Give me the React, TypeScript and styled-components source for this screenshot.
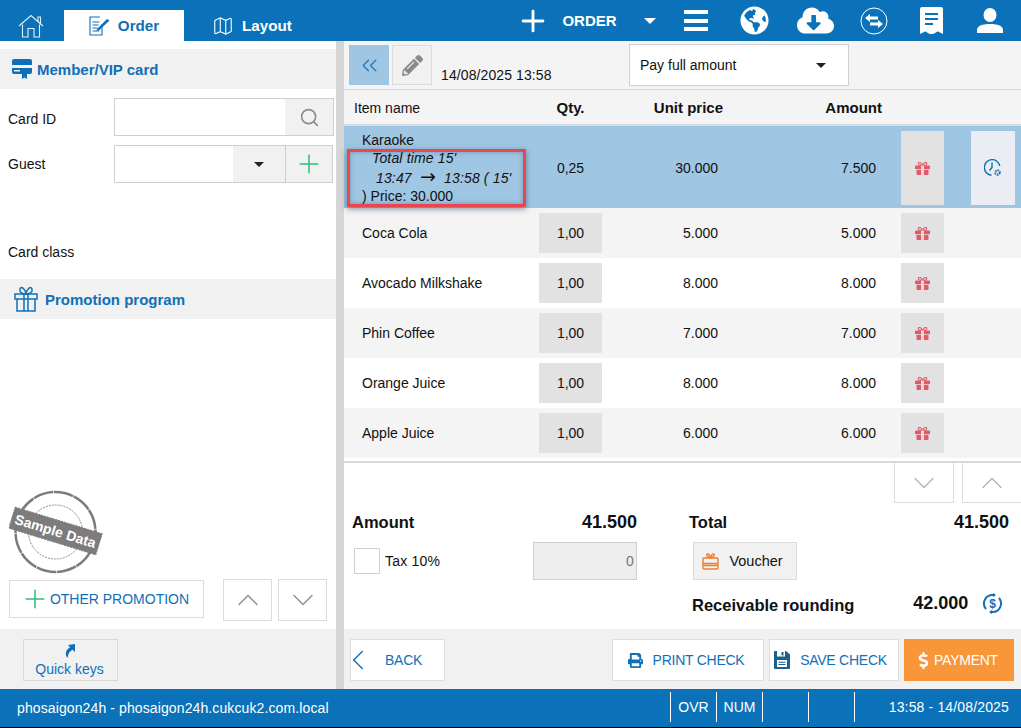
import React from 'react'
import styled, { createGlobalStyle } from 'styled-components'
import { ChevronDown, ChevronLeft, ChevronUp, ChevronsLeft, Map as MapIcon, Plus, Search } from 'lucide-react'
import { FaCloudDownloadAlt, FaDollarSign, FaGlobeAmericas, FaPencilAlt, FaPrint } from 'react-icons/fa'

const BLUE = '#0b72b9'
const LINK = '#0f70b7'
const PANEL = '#f1f1f1'
const LINE = '#d6d6d6'

const GlobalStyle = createGlobalStyle`
  html, body { margin: 0; padding: 0; background: #fff; }
  * { box-sizing: border-box; }
  body { font-family: "Liberation Sans", Arial, sans-serif; font-size: 14px; color: #111; }
`

const Screen = styled.div`
  position: relative;
  width: 1021px;
  height: 728px;
  display: flex;
  flex-direction: column;
  overflow: hidden;
  border-bottom: 1px solid #000;
`

/* top bar */
const TopBar = styled.header`
  height: 41px;
  flex: none;
  display: flex;
  background: ${BLUE};
`
const Tabs = styled.nav`
  display: flex;
  align-items: flex-end;
`
const Tab = styled.div<{ $active?: boolean; $w: number }>`
  width: ${p => p.$w}px;
  height: 31px;
  display: flex;
  align-items: center;
  justify-content: center;
  gap: 8px;
  font-weight: 700;
  font-size: 15.2px;
  color: ${p => (p.$active ? LINK : '#fff')};
  background: ${p => (p.$active ? '#fff' : 'transparent')};
`
const TopActions = styled.div`
  margin-left: auto;
  margin-right: -2px;
  display: flex;
  align-items: center;
  color: #fff;
`
const TopSlot = styled.div<{ $w: number }>`
  width: ${p => p.$w}px;
  height: 41px;
  display: flex;
  align-items: center;
  justify-content: center;
  font-size: 15px;
  font-weight: 700;
`
const Burger = styled.div`
  width: 24px;
  height: 21px;
  border-top: 4px solid #fff;
  border-bottom: 4px solid #fff;
  position: relative;
  &::after {
    content: '';
    position: absolute;
    left: 0;
    right: 0;
    top: 4.5px;
    height: 4px;
    background: #fff;
  }
`
const Caret = styled.span<{ $color?: string; $size?: number }>`
  display: inline-block;
  width: 0;
  height: 0;
  border-left: ${p => p.$size ?? 5}px solid transparent;
  border-right: ${p => p.$size ?? 5}px solid transparent;
  border-top: ${p => p.$size ?? 5}px solid ${p => p.$color ?? '#222'};
`

/* page body */
const Body = styled.div`
  flex: 1;
  min-height: 0;
  display: flex;
`
const LeftPanel = styled.aside`
  width: 344px;
  flex: none;
  display: flex;
  flex-direction: column;
  border-right: 8px solid ${LINE};
  padding-top: 8px;
  background: #fff;
`
const SectionHead = styled.div<{ $gap: number; $pad: number }>`
  height: 40px;
  flex: none;
  display: flex;
  align-items: center;
  gap: ${p => p.$gap}px;
  padding-left: ${p => p.$pad}px;
  background: ${PANEL};
  color: ${LINK};
  font-size: 15px;
  font-weight: 700;
`
const Form = styled.div`
  height: 190px;
  flex: none;
  padding: 9px 2px 0 8px;
  display: flex;
  flex-direction: column;
`
const FormRow = styled.div<{ $mb: number }>`
  display: flex;
  align-items: center;
  height: 38px;
  margin-bottom: ${p => p.$mb}px;
`
const FormLabel = styled.label<{ $dy?: number }>`
  width: 106px;
  font-size: 14px;
  margin-top: ${p => p.$dy ?? 0}px;
`
const FieldBox = styled.div<{ $mr?: number }>`
  flex: 1;
  height: 38px;
  margin-right: ${p => p.$mr ?? 0}px;
  display: flex;
  background: #fff;
  border: 1px solid #cfcfcf;
`
const FieldEnd = styled.div<{ $w: number; $split?: boolean }>`
  width: ${p => p.$w}px;
  display: flex;
  align-items: center;
  justify-content: center;
  background: ${PANEL};
  color: #8c8c8c;
  border-left: ${p => (p.$split ? '1px solid #cfcfcf' : 'none')};
`
const FieldFill = styled.div`
  flex: 1;
`
const StampArea = styled.div`
  flex: 1;
  display: flex;
  align-items: flex-end;
  padding: 0 0 4px 9px;
`
const PromoBar = styled.div`
  height: 50px;
  flex: none;
  display: flex;
  align-items: center;
  padding: 0 7px 8px 9px;
`
const OutlineButton = styled.button<{ $w: number; $h: number; $ml?: number }>`
  width: ${p => p.$w}px;
  height: ${p => p.$h}px;
  margin-left: ${p => p.$ml ?? 0}px;
  display: flex;
  align-items: center;
  justify-content: center;
  gap: 2px;
  padding: 0;
  background: #fff;
  border: 1px solid #dcdcdc;
  color: ${LINK};
  font: 14px "Liberation Sans", Arial, sans-serif;
  white-space: nowrap;
`
const PromoButton = styled(OutlineButton)`
  gap: 0;
  margin-top: -2px;
  padding-right: 4px;
`
const LeftFooter = styled.div`
  height: 60px;
  flex: none;
  padding: 10px 0 0 23px;
  background: ${PANEL};
`
const QuickKeys = styled.button`
  width: 95px;
  height: 42px;
  display: flex;
  flex-direction: column;
  align-items: center;
  justify-content: center;
  gap: 3px;
  padding: 1px 2px 0 0;
  background: ${PANEL};
  border: 1px solid #d9d9d9;
  color: ${LINK};
  font: 14px/16px "Liberation Sans", Arial, sans-serif;
`

/* order side */
const OrderPanel = styled.main`
  flex: 1;
  min-width: 0;
  display: flex;
  flex-direction: column;
`
const OrderBar = styled.div`
  height: 49px;
  flex: none;
  display: flex;
  padding: 4px 0 0 5px;
  background: #f4f4f4;
  border-bottom: 1px solid #d8d8d8;
`
const SquareButton = styled.div<{ $active?: boolean }>`
  width: 40px;
  height: 40px;
  margin-right: 3px;
  display: flex;
  align-items: center;
  justify-content: center;
  background: ${p => (p.$active ? '#9fc6e3' : '#f1f1f1')};
  border: 1px solid ${p => (p.$active ? '#9fc6e3' : '#dcdcdc')};
  color: ${p => (p.$active ? '#2a79b3' : '#8a8a8a')};
`
const DateText = styled.div`
  width: 194px;
  padding: 22px 0 0 6px;
  font-size: 14px;
  letter-spacing: 0.1px;
`
const SelectBox = styled.div`
  width: 220px;
  height: 42px;
  margin-top: -1px;
  display: flex;
  align-items: center;
  justify-content: space-between;
  padding: 0 22px 0 10px;
  background: #fff;
  border: 1px solid #d0d0d0;
  font-size: 14px;
`
const columns = '195px 63px 116px 158px 68px 71px 6px'
const HeadRow = styled.div`
  height: 36px;
  flex: none;
  display: grid;
  grid-template-columns: ${columns};
  align-items: center;
  background: #f4f4f4;
  border-bottom: 2px solid #d4dde4;
  font-size: 15px;
  font-weight: 700;
`
const HeadCell = styled.div<{ $align: string; $plain?: boolean; $shift?: number }>`
  text-align: ${p => p.$align};
  font-size: ${p => (p.$plain ? 14 : 15)}px;
  font-weight: ${p => (p.$plain ? 400 : 700)};
  padding: ${p => (p.$plain ? '1px 0 0 10px' : '0')};
  transform: translateX(${p => p.$shift ?? 0}px);
`
const ItemRow = styled.div<{ $tone: 'sel' | 'grey' | 'white'; $h: number }>`
  height: ${p => p.$h}px;
  flex: none;
  display: grid;
  grid-template-columns: ${columns};
  align-items: stretch;
  padding: 5px 0;
  background: ${p => (p.$tone === 'sel' ? '#9fc6e3' : p.$tone === 'grey' ? '#f4f4f4' : '#fff')};
  font-size: 14px;
`
const NameCell = styled.div`
  padding-left: 18px;
  display: flex;
  flex-direction: column;
  justify-content: center;
  line-height: 18px;
  white-space: pre;
`
const NameLine = styled.div<{ $pad?: number; $italic?: boolean }>`
  padding-left: ${p => p.$pad ?? 0}px;
  font-style: ${p => (p.$italic ? 'italic' : 'normal')};
  letter-spacing: ${p => (p.$italic ? 0.15 : 0)}px;
`
const Arrow = styled.span`
  font-family: "DejaVu Sans", sans-serif;
  font-style: normal;
  font-size: 19px;
`
const QtyCell = styled.div<{ $flat?: boolean }>`
  display: flex;
  align-items: center;
  justify-content: center;
  background: ${p => (p.$flat ? 'transparent' : '#e2e2e2')};
`
const NumCell = styled.div`
  display: flex;
  align-items: center;
  justify-content: flex-end;
`
const GiftCell = styled.div`
  margin-left: 25px;
  display: flex;
  align-items: center;
  justify-content: center;
  background: #e2e2e2;
`
const ClockCell = styled.div`
  margin-left: 27px;
  display: flex;
  align-items: center;
  justify-content: center;
  background: #eaedf3;
`
const Note = styled.div`
  position: absolute;
  left: 347px;
  top: 149px;
  width: 179px;
  height: 58px;
  border: 3px solid #e9474f;
  box-shadow: 0 2px 6px rgba(40, 60, 80, 0.55), inset 0 0 5px rgba(40, 60, 80, 0.35);
  pointer-events: none;
`
const Summary = styled.section`
  flex: 1;
  min-height: 0;
  margin-top: 3px;
  border-top: 2px solid #d8d8d8;
  background: #fff;
  display: flex;
  flex-direction: column;
`
const PagerRow = styled.div`
  height: 41px;
  flex: none;
  display: flex;
  justify-content: flex-end;
  margin-right: -1px;
  gap: 8px;
`
const PagerButton = styled.div<{ $w: number }>`
  width: ${p => p.$w}px;
  height: 40px;
  display: flex;
  align-items: center;
  justify-content: center;
  border: 1px solid #dcdcdc;
  border-top: none;
  color: #b4b4b4;
`
const Totals = styled.div`
  flex: 1;
  display: grid;
  grid-template-columns: 285px 1fr;
  padding: 0 12px 0 8px;
`
const TotalColumn = styled.div<{ $left?: boolean }>`
  display: flex;
  flex-direction: column;
  padding-left: ${p => (p.$left ? 0 : 52)}px;
`
const TotalRow = styled.div`
  height: 38px;
  padding-bottom: 2px;
  display: flex;
  align-items: center;
  justify-content: space-between;
  font-size: 16.5px;
  font-weight: 700;
`
const Money = styled.span`
  font-size: 18px;
`
const TaxRow = styled.div`
  height: 38px;
  display: flex;
  align-items: center;
  font-size: 14px;
  letter-spacing: 0.2px;
`
const CheckBox = styled.div`
  width: 26px;
  height: 26px;
  margin: 0 5px 0 2px;
  background: #fff;
  border: 1px solid #cfcfcf;
  border-radius: 1px;
`
const TaxInput = styled.div`
  width: 104px;
  height: 38px;
  margin-left: auto;
  display: flex;
  align-items: center;
  justify-content: flex-end;
  padding-right: 2px;
  background: #eeeeee;
  border: 1px solid #cfcfcf;
  color: #777;
`
const VoucherButton = styled.button`
  width: 104px;
  height: 38px;
  margin-left: 4px;
  display: flex;
  align-items: center;
  justify-content: center;
  gap: 10px;
  padding: 0 5px 0 0;
  background: #f1f1f1;
  border: 1px solid #dcdcdc;
  color: #111;
  font: 14.5px "Liberation Sans", Arial, sans-serif;
`
const RoundingRow = styled.div`
  display: flex;
  align-items: center;
  height: 30px;
  margin: 10px 0 0 3px;
  font-size: 16.5px;
  font-weight: 700;
`
const RoundingValue = styled(Money)`
  margin-left: 59px;
  margin-top: -3px;
`
const RoundingIcon = styled.span`
  display: flex;
  margin-left: 14px;
  margin-top: -3px;
`
const ActionBar = styled.div`
  height: 60px;
  flex: none;
  display: flex;
  align-items: center;
  padding: 2px 7px 0 6px;
  background: ${PANEL};
`
const ActionButton = styled.button<{ $w: number; $gap: number; $ml?: string; $pr?: number }>`
  width: ${p => p.$w}px;
  height: 42px;
  margin-left: ${p => p.$ml ?? '0'};
  display: flex;
  align-items: center;
  justify-content: center;
  gap: ${p => p.$gap}px;
  padding: 0 ${p => p.$pr ?? 0}px 0 0;
  background: #fff;
  border: 1px solid #dedede;
  color: ${LINK};
  font: 14px "Liberation Sans", Arial, sans-serif;
  letter-spacing: -0.25px;
`
const BackButton = styled(ActionButton)`
  justify-content: flex-start;
`
const BackChevron = styled(ChevronLeft)`
  margin-left: -10px;
`
const PayButton = styled(ActionButton)`
  background: #f9963a;
  border-color: #f9963a;
  color: #fff;
`
const StatusBar = styled.footer`
  height: 38px;
  flex: none;
  display: flex;
  align-items: center;
  background: ${BLUE};
  color: #fff;
  font-size: 14px;
`
const StatusHost = styled.div`
  width: 670px;
  padding-left: 17px;
  letter-spacing: 0.11px;
`
const StatusCell = styled.div`
  width: 46px;
  height: 30px;
  margin-top: -3px;
  display: flex;
  align-items: center;
  justify-content: center;
  border-left: 1px solid #fff;
`
const StatusTime = styled.div`
  flex: 1;
  height: 30px;
  margin-top: -3px;
  display: flex;
  align-items: center;
  justify-content: flex-end;
  padding-right: 12px;
  border-left: 1px solid #fff;
  letter-spacing: 0.15px;
`

/* drawings */
const HomeIcon = () => (
  <svg width="26" height="24" viewBox="0 0 26 24" fill="none" stroke="#e4f0f8" strokeWidth="1.1">
    <path d="M1 12 13 1.500 25 12M20 7.500V3h2.500v6.500" />
    <path d="M4.500 10.500V23H10V14.500h6V23h5.500V10.500" />
  </svg>
)
const OrderIcon = () => (
  <svg width="21" height="20" viewBox="0 0 21 20" fill="none" stroke={LINK} strokeWidth="1.1">
    <path d="M13 8V19H1V1h10" />
    <path d="M3.500 6h7M3.500 9h6M3.500 12h5M3.500 15h7" />
    <path d="M8 13 18 3l2.500 1.500-10 9.500-3 1z" fill={LINK} stroke="none" />
  </svg>
)
const CardIcon = () => (
  <svg width="20" height="21" viewBox="0 0 20 21">
    <path d="M2 0h16a2 2 0 0 1 2 2v11a2 2 0 0 1-2 2h-3v5l-2.500-1.500L10 20v-5H2a2 2 0 0 1-2-2V2a2 2 0 0 1 2-2z" fill={LINK} />
    <rect x="0" y="6" width="20" height="3" fill="#f1f1f1" />
    <rect x="2" y="11" width="6" height="1.500" fill="#f1f1f1" />
  </svg>
)
const PromoIcon = () => (
  <svg width="24" height="26" viewBox="0 0 24 26" fill="none" stroke={LINK} strokeWidth="1.500">
    <rect x="1" y="8" width="22" height="5" />
    <path d="M3 13v12h18V13M10 8v17M14 8v17" />
    <path d="M12 8C8 8 5 6 6 3s5-1 6 5c1-6 5-8 6-5s-2 5-6 5z" />
  </svg>
)
const GiftIcon = () => (
  <svg width="15" height="13" viewBox="0 0 15 13" fill="#e25a68">
    <path d="M1 3.500h13a1 1 0 0 1 1 1V7H0V4.500a1 1 0 0 1 1-1zM1.500 7.800h12V12a1 1 0 0 1-1 1h-10a1 1 0 0 1-1-1z" />
    <path d="M7.500 3.500C5 3.500 3 2.800 3.200 1.300S6.500.2 7.500 3.500c1-3.300 4.100-3.700 4.300-2.200S10 3.500 7.500 3.500z" fill="none" stroke="#e25a68" strokeWidth="1.100" />
    <rect x="6" y="3.500" width="3" height="9.500" fill="#f3d5d8" />
  </svg>
)
const SwapIcon = () => (
  <svg width="28" height="28" viewBox="0 0 28 28" fill="#fff">
    <circle cx="14" cy="14" r="13" fill="none" stroke="#fff" strokeWidth="1" />
    <path d="M5 11l5-4v2.500h8v3h-8V15zM23 17l-5 4v-2.500h-8v-3h8V13z" />
  </svg>
)
const ReceiptIcon = () => (
  <svg width="23" height="27" viewBox="0 0 23 27">
    <path d="M2 0h19a2 2 0 0 1 2 2v25l-5-2.500c-2 0-2.500 2.500-6.500 2.500S7 24.500 5 24.500L0 27V2a2 2 0 0 1 2-2z" fill="#fff" />
    <path d="M5 6h13v2H5zM5 11h13v2H5zM5 16h8v2H5z" fill={BLUE} />
  </svg>
)
const UserIcon = () => (
  <svg width="26" height="25" viewBox="0 0 26 25" fill="#fff">
    <ellipse cx="13" cy="7" rx="6.500" ry="7" />
    <path d="M0 25v-3c0-4 5-6 13-6s13 2 13 6v3z" />
  </svg>
)
const ClockGearIcon = () => (
  <svg width="18" height="18" viewBox="0 0 18 18" fill="none" stroke={LINK} strokeWidth="1.400">
    <path d="M15.800 7A7.800 7.800 0 1 0 7.500 16.200" />
    <path d="M8 3.500V8.500L5.500 11.500" />
    <circle cx="13.500" cy="13.500" r="2.200" strokeWidth="2" strokeDasharray="1.500 .8" />
  </svg>
)
const VoucherIcon = () => (
  <svg width="17" height="17" viewBox="0 0 17 17" fill="none" stroke="#f07f2e" strokeWidth="1.400">
    <rect x="1" y="5" width="15" height="11" rx="1" />
    <path d="M1 10.500h15M1 12.500h15" />
    <path d="M8.500 5C6 4 4 2.500 5 1.200S8 2 8.500 5c.5-3 2.500-5 3.500-3.800S11 4 8.500 5z" />
  </svg>
)
const RoundIcon = () => (
  <svg width="21" height="21" viewBox="0 0 21 21" fill="none" stroke={LINK} strokeWidth="2">
    <path d="M4 16A8.500 8.500 0 0 1 10.500 2h2M17 5a8.500 8.500 0 0 1-6.500 14h-2" />
    <path d="M11 0l3 2-3 2zM10 17l-3 2 3 2z" fill={LINK} stroke="none" />
    <text x="10.500" y="14.500" textAnchor="middle" fontSize="12" fontWeight="700" fill={LINK} stroke="none" fontFamily="Liberation Sans">$</text>
  </svg>
)
const QuickIcon = () => (
  <svg width="12" height="14" viewBox="0 0 12 14" fill={LINK}>
    <path d="M11 0v8L8.500 5.800C6 7 4 9.500 3.500 14 1 11 1 6 6 3.200L4 1z" />
  </svg>
)
const FloppyIcon = () => (
  <svg width="16" height="18" viewBox="0 0 16 18">
    <path d="M0 1a1 1 0 0 1 1-1h11l4 3.500V17a1 1 0 0 1-1 1H1a1 1 0 0 1-1-1z" fill="#1d5f8d" />
    <rect x="3" y="0" width="8" height="5.500" fill="#fff" />
    <rect x="7.500" y="1" width="2" height="3.500" fill="#1d5f8d" />
    <path d="M3 9h10v7H3z" fill="#fff" />
    <path d="M4.500 10.700h7v1h-7zM4.500 13h7v1h-7z" fill="#1d5f8d" />
  </svg>
)
const Stamp = () => (
  <svg width="94" height="86" viewBox="0 0 94 86" fill="none">
    <circle cx="46.500" cy="43" r="40" stroke="#7d7b7e" strokeWidth="2.500" strokeDasharray="20 .7" />
    <circle cx="46.500" cy="43" r="27" stroke="#8f8d90" strokeWidth="1" strokeDasharray="2 1" />
    <g transform="rotate(17 46.500 42)">
      <rect x="1" y="31" width="91" height="22" fill="#7d7b7e" stroke="#7d7b7e" strokeDasharray="2 1" />
      <text x="46.500" y="47" textAnchor="middle" fontSize="14" fontWeight="700" fill="#fff" fontFamily="Liberation Sans">Sample Data</text>
    </g>
  </svg>
)

const items = [
  { name: 'Coca Cola', price: '5.000', tone: 'grey' },
  { name: 'Avocado Milkshake', price: '8.000', tone: 'white' },
  { name: 'Phin Coffee', price: '7.000', tone: 'grey' },
  { name: 'Orange Juice', price: '8.000', tone: 'white' },
  { name: 'Apple Juice', price: '6.000', tone: 'grey' },
] as const

export default function App() {
  return (
    <Screen>
      <GlobalStyle />
      <TopBar>
        <Tabs>
          <Tab $w={61}><HomeIcon /></Tab>
          <Tab $w={3} />
          <Tab $w={120} $active><OrderIcon />Order</Tab>
          <Tab $w={136}><MapIcon size={22} strokeWidth={1.2} />Layout</Tab>
        </Tabs>
        <TopActions>
          <TopSlot $w={42}><Plus size={34} strokeWidth={2} /></TopSlot>
          <TopSlot $w={71}>ORDER</TopSlot>
          <TopSlot $w={49}><Caret $color="#fff" $size={6} /></TopSlot>
          <TopSlot $w={44}><Burger /></TopSlot>
          <TopSlot $w={72}><FaGlobeAmericas size={29} /></TopSlot>
          <TopSlot $w={50}><FaCloudDownloadAlt size={37} /></TopSlot>
          <TopSlot $w={67}><SwapIcon /></TopSlot>
          <TopSlot $w={49}><ReceiptIcon /></TopSlot>
          <TopSlot $w={67}><UserIcon /></TopSlot>
        </TopActions>
      </TopBar>

      <Body>
        <LeftPanel>
          <SectionHead $gap={5} $pad={12}><CardIcon />Member/VIP card</SectionHead>
          <Form>
            <FormRow $mb={9}>
              <FormLabel $dy={3}>Card ID</FormLabel>
              <FieldBox>
                <FieldFill />
                <FieldEnd $w={48}><Search size={21} strokeWidth={1.8} /></FieldEnd>
              </FieldBox>
            </FormRow>
            <FormRow $mb={61}>
              <FormLabel $dy={-1}>Guest</FormLabel>
              <FieldBox $mr={1}>
                <FieldFill />
                <FieldEnd $w={52}><Caret /></FieldEnd>
                <FieldEnd $w={47} $split><Plus size={30} strokeWidth={1.2} color="#2dbd7e" /></FieldEnd>
              </FieldBox>
            </FormRow>
            <FormLabel>Card class</FormLabel>
          </Form>
          <SectionHead $gap={7} $pad={14}><PromoIcon />Promotion program</SectionHead>
          <StampArea><Stamp /></StampArea>
          <PromoBar>
            <PromoButton $w={195} $h={38}><Plus size={30} strokeWidth={1.2} color="#2dbd7e" />OTHER PROMOTION</PromoButton>
            <OutlineButton $w={49} $h={42} $ml={19}><ChevronUp size={36} strokeWidth={0.9} color="#8c8c8c" /></OutlineButton>
            <OutlineButton $w={49} $h={42} $ml={6}><ChevronDown size={36} strokeWidth={0.9} color="#8c8c8c" /></OutlineButton>
          </PromoBar>
          <LeftFooter>
            <QuickKeys><QuickIcon />Quick keys</QuickKeys>
          </LeftFooter>
        </LeftPanel>

        <OrderPanel>
          <OrderBar>
            <SquareButton $active><ChevronsLeft size={25} strokeWidth={1.3} /></SquareButton>
            <SquareButton><FaPencilAlt size={21} /></SquareButton>
            <DateText>14/08/2025 13:58</DateText>
            <SelectBox>Pay full amount<Caret /></SelectBox>
          </OrderBar>
          <HeadRow>
            <HeadCell $align="left" $plain>Item name</HeadCell>
            <HeadCell $align="center">Qty.</HeadCell>
            <HeadCell $align="right" $shift={5}>Unit price</HeadCell>
            <HeadCell $align="right" $shift={6}>Amount</HeadCell>
          </HeadRow>
          <ItemRow $tone="sel" $h={82}>
            <NameCell>
              <NameLine>Karaoke</NameLine>
              <NameLine $italic $pad={10}>Total time 15'</NameLine>
              <NameLine $italic $pad={14}>13:47  <Arrow>→</Arrow>  13:58 ( 15'</NameLine>
              <NameLine>) Price: 30.000</NameLine>
            </NameCell>
            <QtyCell $flat>0,25</QtyCell>
            <NumCell>30.000</NumCell>
            <NumCell>7.500</NumCell>
            <GiftCell><GiftIcon /></GiftCell>
            <ClockCell><ClockGearIcon /></ClockCell>
          </ItemRow>
          {items.map(item => (
            <ItemRow key={item.name} $tone={item.tone} $h={50}>
              <NameCell>{item.name}</NameCell>
              <QtyCell>1,00</QtyCell>
              <NumCell>{item.price}</NumCell>
              <NumCell>{item.price}</NumCell>
              <GiftCell><GiftIcon /></GiftCell>
            </ItemRow>
          ))}
          <Summary>
            <PagerRow>
              <PagerButton $w={60}><ChevronDown size={36} strokeWidth={0.9} /></PagerButton>
              <PagerButton $w={60}><ChevronUp size={36} strokeWidth={0.9} /></PagerButton>
            </PagerRow>
            <Totals>
              <TotalColumn $left>
                <TotalRow>Amount<Money>41.500</Money></TotalRow>
                <TaxRow>
                  <CheckBox />Tax 10%
                  <TaxInput>0</TaxInput>
                </TaxRow>
              </TotalColumn>
              <TotalColumn>
                <TotalRow>Total<Money>41.500</Money></TotalRow>
                <VoucherButton><VoucherIcon />Voucher</VoucherButton>
                <RoundingRow>
                  Receivable rounding
                  <RoundingValue>42.000</RoundingValue>
                  <RoundingIcon><RoundIcon /></RoundingIcon>
                </RoundingRow>
              </TotalColumn>
            </Totals>
          </Summary>
          <ActionBar>
            <BackButton $w={95} $gap={10}><BackChevron size={34} strokeWidth={1} />BACK</BackButton>
            <ActionButton $w={152} $gap={10} $ml="auto" $pr={4}><FaPrint size={15} />PRINT CHECK</ActionButton>
            <ActionButton $w={130} $gap={10} $ml="5px" $pr={7}><FloppyIcon />SAVE CHECK</ActionButton>
            <PayButton $w={110} $gap={2} $ml="5px" $pr={5}><FaDollarSign size={17} />PAYMENT</PayButton>
          </ActionBar>
        </OrderPanel>
      </Body>

      <StatusBar>
        <StatusHost>phosaigon24h - phosaigon24h.cukcuk2.com.local</StatusHost>
        <StatusCell>OVR</StatusCell>
        <StatusCell>NUM</StatusCell>
        <StatusCell />
        <StatusCell />
        <StatusTime>13:58 - 14/08/2025</StatusTime>
      </StatusBar>

      <Note />
    </Screen>
  )
}
